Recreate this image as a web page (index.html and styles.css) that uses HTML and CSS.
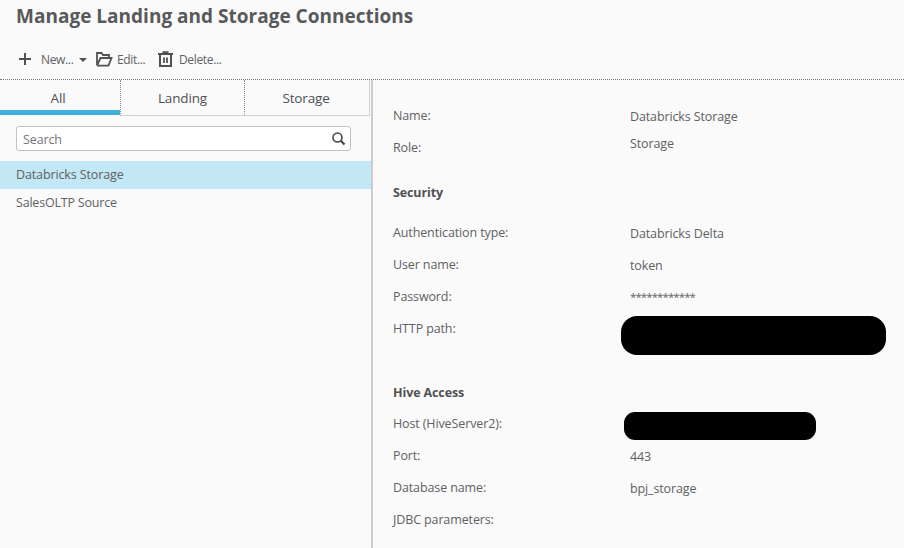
FILE: index.html
```html
<!DOCTYPE html>
<html lang="en">
<head>
<meta charset="utf-8">
<title>Manage Landing and Storage Connections</title>
<link rel="stylesheet" href="styles.css">
</head>
<body>
<header class="header">
  <h1 class="title">Manage Landing and Storage Connections</h1>
  <div class="toolbar">
    <button class="tool tool-new">
      <svg width="12" height="12" viewBox="0 0 12 12"><path d="M6 0v12M0 6h12" stroke="#4f5153" stroke-width="2"/></svg>
      <span>New...</span>
      <svg class="caret" width="8" height="4" viewBox="0 0 8 4"><path d="M0 0h8L4 4z" fill="#4f5153"/></svg>
    </button>
    <button class="tool tool-edit">
      <svg width="17" height="15" viewBox="0 0 17 15" fill="none" stroke="#4f5153" stroke-width="1.8"><path d="M1 13.500V1h4.500L7 3h6v3M1 13.500L4.500 6h11L12.500 13.600H1"/></svg>
      <span>Edit...</span>
    </button>
    <button class="tool tool-delete">
      <svg width="15" height="17" viewBox="0 0 15 17" fill="none" stroke="#4f5153" stroke-width="2"><path d="M0 3h15M4.500 1.200h6M2 3v12h11V3"/><path d="M6 6.500v5.500M9 6.500v5.500" stroke-width="1.800"/></svg>
      <span>Delete...</span>
    </button>
  </div>
</header>
<main class="main">
  <aside class="sidebar">
    <nav class="tabs">
      <button class="tab tab-active">All</button>
      <button class="tab">Landing</button>
      <button class="tab">Storage</button>
    </nav>
    <div class="search">
      <span>Search</span>
      <svg width="14" height="14" viewBox="0 0 14 14" fill="none" stroke="#444648"><circle cx="5.500" cy="5.500" r="4.500" stroke-width="1.600"/><path d="M8.800 8.800L12.500 12.500" stroke-width="2.200"/></svg>
    </div>
    <ul class="list">
      <li class="item item-selected">Databricks Storage</li>
      <li class="item">SalesOLTP Source</li>
    </ul>
  </aside>
  <section class="details">
    <dl class="fields">
      <dt>Name:</dt><dd>Databricks Storage</dd>
      <dt>Role:</dt><dd class="role">Storage</dd>
    </dl>
    <h2 class="heading heading-security">Security</h2>
    <dl class="fields fields-security">
      <dt>Authentication type:</dt><dd>Databricks Delta</dd>
      <dt>User name:</dt><dd>token</dd>
      <dt>Password:</dt><dd><span class="password">************</span></dd>
      <dt>HTTP path:</dt><dd><span class="redacted redacted-path"></span></dd>
    </dl>
    <h2 class="heading heading-hive">Hive Access</h2>
    <dl class="fields">
      <dt>Host (HiveServer2):</dt><dd><span class="redacted redacted-host"></span></dd>
      <dt>Port:</dt><dd>443</dd>
      <dt>Database name:</dt><dd>bpj_storage</dd>
      <dt>JDBC parameters:</dt><dd></dd>
    </dl>
  </section>
</main>
</body>
</html>
```
FILE: styles.css
```css
* { box-sizing: border-box; }
body {
  margin: 0;
  height: 548px;
  display: flex;
  flex-direction: column;
  overflow: hidden;
  background: #fafafa;
  color: #606163;
  font: 12.5px/20px "Open Sans", "Noto Sans", sans-serif;
  letter-spacing: -0.12px;
}
button { border: 0; padding: 0; background: none; color: inherit; font: inherit; letter-spacing: inherit; }
.header { height: 80px; border-bottom: 1px dotted #777; padding-left: 16px; }
.title { margin: 0; padding-top: 3px; font-size: 19px; line-height: 26px; font-weight: 700; letter-spacing: 0.01px; color: #58595b; white-space: nowrap; }
.toolbar { display: flex; margin-top: 20px; height: 20px; }
.tool { display: flex; align-items: center; font-size: 12px; letter-spacing: -0.35px; }
.tool span { padding-top: 2px; }
.tool-new { width: 80px; padding-left: 3px; }
.tool-new span { margin-left: 10px; }
.caret { margin: 2px 0 0 6px; }
.tool-edit { width: 62px; gap: 4px; }
.tool-delete { gap: 6px; }
.main { flex: 1; display: flex; }
.sidebar { width: 373px; border-right: 2px solid #ccc; }
.tabs { display: grid; grid-template-columns: 120px 124px 126px; height: 36px; }
.tab { border-bottom: 1px solid #d2d2d2; border-left: 1px dotted #888; font-size: 13.5px; letter-spacing: -0.15px; color: #4f5052; }
.tab:last-child { border-right: 1px solid #d2d2d2; padding-right: 2px; }
.tab-active { border-left: 0; border-bottom: 5px solid #40b0da; margin-bottom: 1px; padding: 5px 4px 0 0; }
.search { display: flex; justify-content: space-between; align-items: center; width: 335px; height: 25px; margin: 10px 0 10px 16px; padding: 0 4px 0 6px; border: 1px solid #c3c3c3; border-radius: 3px; background: #fff; color: #757678; }
.search span { padding-top: 2px; }
.list { margin: 0; padding: 0; list-style: none; }
.item { height: 28px; padding-left: 16px; line-height: 27px; }
.item:not(.item-selected) { letter-spacing: -0.2px; }
.item-selected { background: #c2e7f5; }
.details { flex: 1; padding: 20px 0 0 20px; }
.fields { display: grid; grid-template-columns: 237px 1fr; grid-auto-rows: 32px; margin: 0; line-height: 32px; }
.fields dt { white-space: nowrap; }
.fields dd { margin: 0; padding-top: 1px; }
.fields .role { padding: 0; line-height: 24px; }
.fields-security { line-height: 34px; }
.password { display: block; font-size: 11.500px; line-height: 32px; letter-spacing: -0.92px; }
.heading { margin: 0; font-size: 12.5px; font-weight: 700; color: #505153; }
.heading-security { height: 52px; padding-top: 19px; }
.heading-hive { height: 64px; padding-top: 39px; }
.redacted { display: block; background: #000; }
.redacted-path { width: 265px; height: 39px; margin: 3px 0 0 -9px; border-radius: 16px; }
.redacted-host { width: 192px; height: 28px; margin: 3px 0 0 -6px; border-radius: 11px; }
```
